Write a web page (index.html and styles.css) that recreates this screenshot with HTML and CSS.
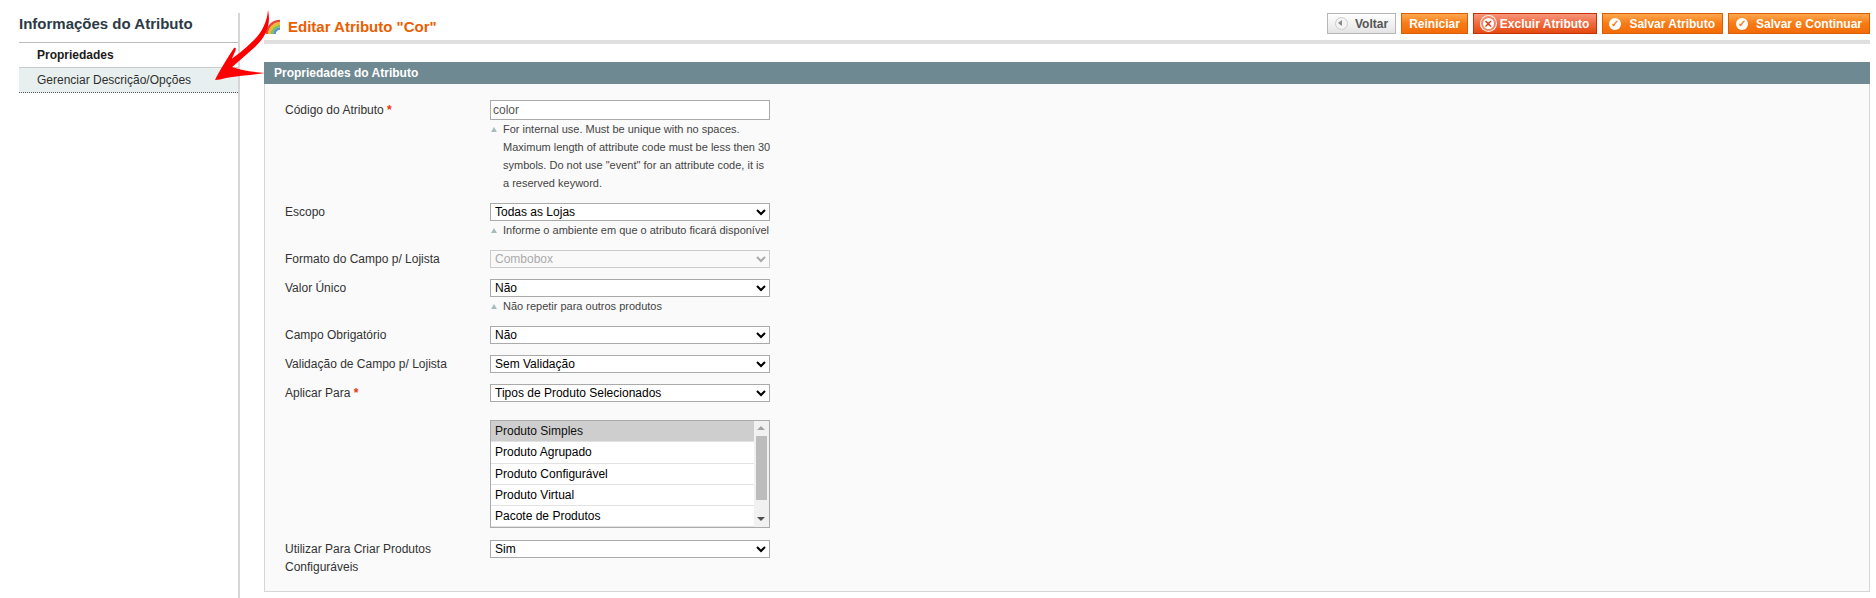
FILE: index.html
```html
<!DOCTYPE html>
<html>

<head>
  <title>Editar Atributo</title>
  <link rel="stylesheet" href="styles.css">
</head>

<body>
  <div class="wrapper">
    <div class="side">
      <h3>Informações do Atributo</h3>
      <ul class="tabs">
        <li class="active">Propriedades</li>
        <li class="tab-on">Gerenciar Descrição/Opções</li>
      </ul>
    </div>

    <div class="main">
      <div class="head">
        <h3 class="title">
          <svg class="rainbow" width="16" height="16" viewBox="0 0 16 16">
            <path d="M2 15 A13 13 0 0 1 15 2" fill="none" stroke="#e8473a" stroke-width="2.600" />
            <path d="M4.500 15 A10.500 10.500 0 0 1 15 4.500" fill="none" stroke="#f5b62e" stroke-width="2.600" />
            <path d="M7 15 A8 8 0 0 1 15 7" fill="none" stroke="#86c24a" stroke-width="2.600" />
            <path d="M9.500 15 A5.500 5.500 0 0 1 15 9.500" fill="none" stroke="#5a8fd0" stroke-width="2.600" />
          </svg>
          Editar Atributo "Cor"
        </h3>
        <div class="buttons">
          <button class="btn btn-back"><span class="ico ico-back"></span>Voltar</button>
          <button class="btn">Reiniciar</button>
          <button class="btn btn-delete"><span class="ico ico-x">×</span>Excluir Atributo</button>
          <button class="btn btn-save"><span class="ico ico-ok">✓</span>Salvar Atributo</button>
          <button class="btn"><span class="ico ico-ok">✓</span>Salvar e Continuar</button>
        </div>
      </div>

      <div class="panel-head">Propriedades do Atributo</div>
      <div class="panel">
        <div class="row row-input">
          <label>Código do Atributo <span class="req">*</span></label>
          <div class="value">
            <input class="text" type="text" value="color">
            <p class="note">For internal use. Must be unique with no spaces. Maximum length of attribute code must be less then 30 symbols. Do not use "event" for an attribute code, it is a reserved keyword.</p>
          </div>
        </div>
        <div class="row">
          <label>Escopo</label>
          <div class="value">
            <select><option>Todas as Lojas</option></select>
            <p class="note">Informe o ambiente em que o atributo ficará disponível</p>
          </div>
        </div>
        <div class="row">
          <label>Formato do Campo p/ Lojista</label>
          <div class="value"><select disabled><option>Combobox</option></select></div>
        </div>
        <div class="row">
          <label>Valor Único</label>
          <div class="value">
            <select><option>Não</option></select>
            <p class="note">Não repetir para outros produtos</p>
          </div>
        </div>
        <div class="row">
          <label>Campo Obrigatório</label>
          <div class="value"><select><option>Não</option></select></div>
        </div>
        <div class="row">
          <label>Validação de Campo p/ Lojista</label>
          <div class="value"><select><option>Sem Validação</option></select></div>
        </div>
        <div class="row">
          <label>Aplicar Para <span class="req">*</span></label>
          <div class="value"><select><option>Tipos de Produto Selecionados</option></select></div>
        </div>
        <div class="row row-list">
          <label></label>
          <div class="value list-wrap">
            <select class="multi" multiple size="5">
              <option selected>Produto Simples</option>
              <option>Produto Agrupado</option>
              <option>Produto Configurável</option>
              <option>Produto Virtual</option>
              <option>Pacote de Produtos</option>
              <option>Produto para Download</option>
            </select>
            <div class="scrollbar">
              <span class="arr arr-up"></span>
              <span class="thumb"></span>
              <span class="arr arr-down"></span>
            </div>
          </div>
        </div>
        <div class="row">
          <label>Utilizar Para Criar Produtos Configuráveis</label>
          <div class="value"><select><option>Sim</option></select></div>
        </div>
      </div>
    </div>
  </div>

  <!-- seta desenhada por cima da tela -->
  <svg class="arrow" width="90" height="90" viewBox="0 0 90 90">
    <path d="M58 10 C61 24 57 36 45 47 C37 54 29 61 21 68 L16 63 C26 56 36 48 44 40 C52 32 57 22 58 10 Z" fill="#f00" />
    <path d="M5 80 C9 72 16 60 24 48 C27 47 26 50 24 54 C22 58 20 63 22 67 C30 70 42 72 55 73 C42 75 26 76 16 78 C12 79 8 80 5 80 Z" fill="#f00" />
  </svg>
</body>

</html>
```

FILE: styles.css
```css
body {
  margin: 0;
  background: white;
  font-family: "Liberation Sans", Arial, sans-serif;
  font-size: 12px;
  color: #2f2f2f;
  height: 598px;
  overflow: hidden;
}

.wrapper {
  display: flex;
  padding-top: 13px;
}

h3 {
  margin: 0;
}

.side {
  width: 219px;
  margin-left: 19px;
  margin-right: 24px;
  height: 585px;
  border-right: 2px solid #d6d6d6;
  flex: none;
}

.side h3 {
  font-size: 15px;
  line-height: 18px;
  height: 27px;
  padding-top: 2px;
  color: #2b3a45;
  border-bottom: 1px solid #bbb;
}

.tabs {
  list-style: none;
  margin: 0;
  padding: 0;
}

.tabs li {
  padding-left: 18px;
  height: 24px;
  color: #2f2f2f;
}

.tabs .active {
  font-weight: bold;
  line-height: 24px;
  color: #1b1b1b;
  border-bottom: 1px solid #ccc;
}

.tabs .tab-on {
  line-height: 25px;
  background: #e7efef;
  border-bottom: 1px dotted #555;
}

.main {
  flex: 1;
  margin-right: 6px;
}

.head {
  display: flex;
  justify-content: space-between;
  height: 23px;
  padding-bottom: 4px;
  border-bottom: 4px solid #dfdfdf;
  margin-bottom: 18px;
}

.title {
  font-size: 15px;
  line-height: 18px;
  color: #eb5e00;
  display: flex;
  align-items: center;
  gap: 7px;
  padding: 4px 0 0 1px;
}

.buttons {
  display: flex;
  gap: 5px;
  height: 21px;
}

.btn {
  font: bold 12px "Liberation Sans", Arial, sans-serif;
  color: #fff;
  height: 21px;
  padding: 0 7px;
  border: 1px solid #d85f04;
  background: linear-gradient(#ffa84f, #f77c16 50%, #f36b07);
  display: flex;
  align-items: center;
  gap: 5px;
  white-space: nowrap;
}

.btn-save {
  padding-left: 6px;
}

.btn-back {
  color: #555;
  border-color: #b6b6b6;
  background: linear-gradient(#fff, #e4e4e4);
}

.btn-delete {
  gap: 4px;
  border-color: #c63106;
  background: linear-gradient(#f8977c, #ef6a3f 50%, #e44a10);
}

.ico {
  width: 12px;
  height: 12px;
  border-radius: 50%;
  background: white;
  color: #f77c16;
  font-size: 10px;
  line-height: 12px;
  text-align: center;
  flex: none;
}

.ico-ok {
  margin-right: 3px;
}

.ico-x {
  width: 11px;
  height: 11px;
  margin: 0 2px;
  color: #d9431a;
  font-size: 13px;
  line-height: 11px;
  box-shadow: 0 0 0 2px #f08a68, 0 0 0 3px #fff3ee;
}

.ico-back {
  position: relative;
  width: 13px;
  height: 13px;
  margin-right: 2px;
  background: #f4f4f4;
  border: 1px solid #ccc;
  box-sizing: border-box;
}

.ico-back::after {
  content: "";
  position: absolute;
  left: 2px;
  top: 2px;
  border: 3px solid transparent;
  border-left: 0;
  border-right: 4px solid #888;
}

.panel-head {
  background: #6f8992;
  color: white;
  font-weight: bold;
  line-height: 22px;
  height: 22px;
  padding-left: 10px;
}

.panel {
  background: #fafafa;
  border: 1px solid #d6d6d6;
  border-top: 0;
  padding: 16px 0 15px 20px;
}

.row {
  display: flex;
  margin-bottom: 11px;
}

.row:last-child {
  margin-bottom: 0;
}

.row-list {
  margin-top: 18px;
  margin-bottom: 12px;
}

.row label {
  width: 205px;
  line-height: 18px;
  flex: none;
  color: #333;
  padding-right: 10px;
  box-sizing: border-box;
}

.row-input label {
  line-height: 20px;
}

.req {
  color: #eb340a;
  font-weight: bold;
}

.value {
  width: 280px;
}

.text,
select {
  display: block;
  width: 280px;
  height: 18px;
  box-sizing: border-box;
  border: 1px solid #aaa;
  border-radius: 0;
  background: white;
  font: 12px "Liberation Sans", Arial, sans-serif;
  color: #000;
  padding: 0;
}

select:disabled {
  border-color: #ccc;
  background: #f9f9f9;
  color: #aaa;
  opacity: 1;
}

.text {
  height: 20px;
  padding: 0 2px;
  color: #555;
}

.list-wrap {
  position: relative;
}

.multi {
  height: 108px;
}

.multi option {
  padding: 3px 4px 3.3px;
  min-height: 0;
  border-bottom: 1px solid #e2e2e2;
}

.scrollbar {
  position: absolute;
  top: 1px;
  right: 1px;
  bottom: 1px;
  width: 15px;
  background: #f1f1f1;
  display: flex;
  flex-direction: column;
  align-items: center;
}

.thumb {
  width: 11px;
  height: 64px;
  margin-top: 15px;
  background: #bcbcbc;
}

.arr {
  position: absolute;
  left: 3px;
  border-left: 4px solid transparent;
  border-right: 4px solid transparent;
}

.arr-up {
  top: 5px;
  border-bottom: 4px solid #a3a3a3;
}

.arr-down {
  bottom: 6px;
  border-top: 4px solid #505050;
}

.note {
  margin: 0 -2px 0 0;
  padding-left: 13px;
  font-size: 11px;
  line-height: 18px;
  color: #444;
  position: relative;
}

.note::before {
  content: "";
  position: absolute;
  left: 1px;
  top: 7px;
  border-left: 3.5px solid transparent;
  border-right: 3.5px solid transparent;
  border-bottom: 5px solid #a9bcbd;
}

.arrow {
  position: absolute;
  left: 210px;
  top: 0;
  pointer-events: none;
}
```
